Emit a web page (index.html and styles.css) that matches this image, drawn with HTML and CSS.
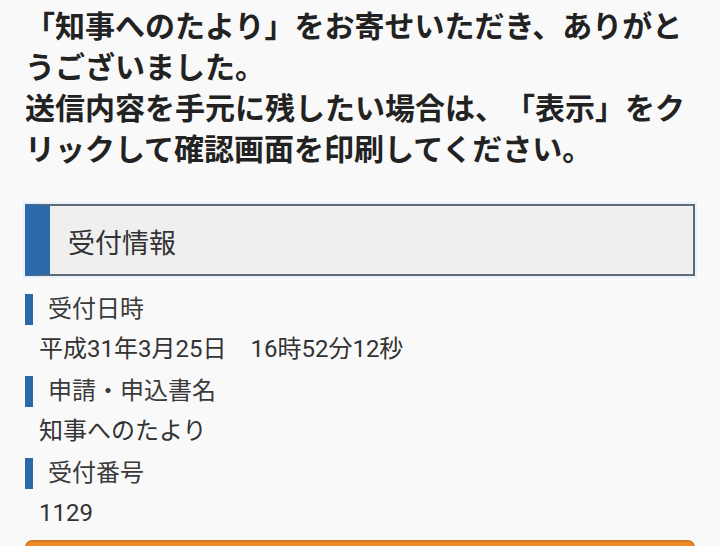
FILE: index.html
```html
<!DOCTYPE html>
<html lang="ja">

<head>
    <meta charset="UTF-8">
    <meta name="viewport" content="width=device-width, initial-scale=1.0">
    <title>受付完了</title>
    <link rel="stylesheet" href="styles.css">
</head>

<body>
    <div class="page">
        <!-- Thank-you message -->
        <p class="intro">「知事へのたより」をお寄せいただき、ありがとうございました。<br>送信内容を手元に残したい場合は、「表示」をクリックして確認画面を印刷してください。</p>

        <!-- Receipt info -->
        <div class="section-head">
            <h2>受付情報</h2>
        </div>

        <dl class="info-list">
            <div class="info-item">
                <dt>受付日時</dt>
                <dd>平成31年3月25日　16時52分12秒</dd>
            </div>
            <div class="info-item">
                <dt>申請・申込書名</dt>
                <dd>知事へのたより</dd>
            </div>
            <div class="info-item">
                <dt>受付番号</dt>
                <dd>1129</dd>
            </div>
        </dl>

        <button class="show-btn">表示</button>
    </div>
</body>

</html>
```

FILE: styles.css
```css
* {
    margin: 0;
    padding: 0;
    box-sizing: border-box;
}

body {
    font-family: Roboto, "Noto Sans CJK JP", sans-serif;
    background-color: #f9f9f9;
    color: #333;
    overflow: hidden;
    text-spacing-trim: space-all;
}

.page {
    padding: 6px 25px 0;
}

.intro {
    font-size: 30px;
    line-height: 41px;
    font-weight: bold;
    color: #222;
}

.section-head {
    margin-top: 34px;
    height: 72px;
    display: flex;
    align-items: center;
    background-color: #efefef;
    border: 2px solid #5f6a74;
    border-left: 25px solid #2c69ab;
    box-shadow: 0 0 0 2px #e6f2fb;
    padding-left: 18px;
}

.section-head h2 {
    font-size: 27px;
    font-weight: normal;
    color: #333;
    padding-top: 3px;
}

.info-list {
    margin-top: 18px;
}

.info-item {
    margin-bottom: 10px;
}

.info-item dt {
    font-size: 24px;
    line-height: 31px;
    border-left: 8px solid #2c69ab;
    padding-left: 15px;
    color: #3a3a3a;
}

.info-item dd {
    margin-top: 7px;
    font-size: 24px;
    line-height: 34px;
    padding-left: 14px;
    color: #333;
}

.show-btn {
    display: block;
    width: 100%;
    height: 64px;
    margin-top: 8px;
    padding-top: 14px;
    background-color: #ef8a2b;
    border: 2px solid #d47722;
    border-radius: 7px;
    color: #fff;
    font-family: inherit;
    font-size: 24px;
    line-height: 32px;
    cursor: pointer;
}
```
